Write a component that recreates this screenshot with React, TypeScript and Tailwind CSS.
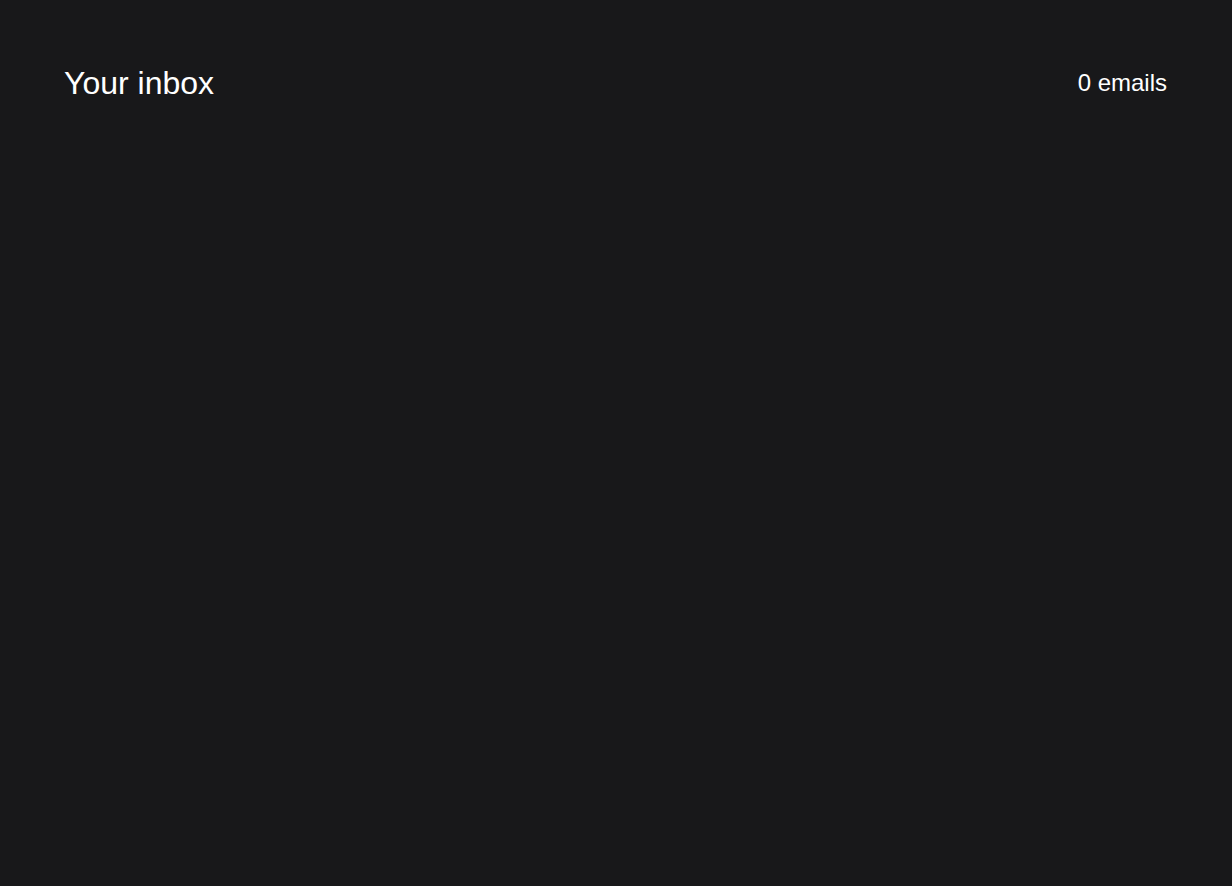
export default function App() {
  return (
    <div
      className="min-h-screen bg-[#18181a] px-16 pt-[59px] text-white"
      style={{ fontFamily: '"Liberation Sans", Arial, sans-serif' }}
    >
      {/* Header */}
      <header className="flex items-center justify-between">
        <h1 className="text-[32px] leading-[48px] font-normal">Your inbox</h1>
        <span className="pr-px text-[24px] leading-9">0 emails</span>
      </header>
    </div>
  );
}
